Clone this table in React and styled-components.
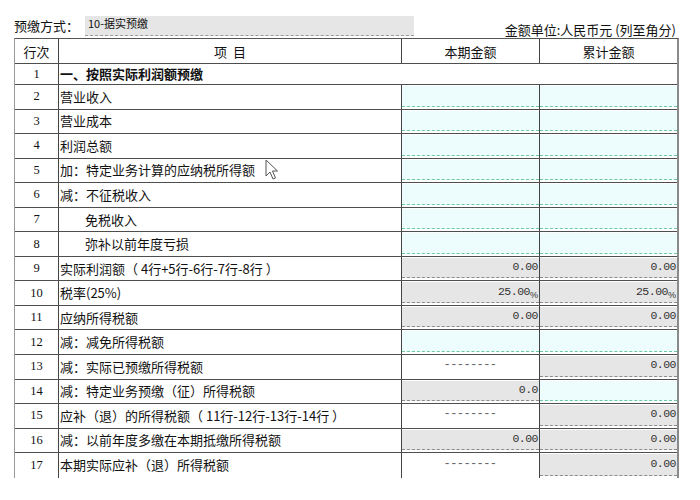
import React from 'react';
import styled, { createGlobalStyle } from 'styled-components';

const Global = createGlobalStyle`
  html, body { margin: 0; padding: 0; background: #fff; }
  body { font-family: "Noto Sans CJK SC", "Noto Sans", sans-serif; color: #111; }
`;

const Page = styled.div`
  position: relative;
  width: 700px;
  height: 500px;
  padding: 16px 0 0 14px;
  box-sizing: border-box;
  overflow: hidden;
`;

const TopBar = styled.div`
  display: flex;
  align-items: flex-start;
  height: 22px;
  width: 665px;
`;

const Label = styled.span`
  font-size: 13px;
  line-height: 20px;
  white-space: nowrap;
`;

const SelectBox = styled.div`
  margin-left: 6px;
  width: 329px;
  height: 20px;
  box-sizing: border-box;
  background: #e6e6e6;
  border-bottom: 1px dashed #9a9a9a;
  font-size: 11px;
  line-height: 14px;
  padding-left: 3px;
`;

const Unit = styled.span`
  margin-left: auto;
  align-self: flex-end;
  font-size: 13px;
  line-height: 16px;
  padding-right: 3px;
  white-space: pre;
`;

const Table = styled.div`
  width: 665px;
  box-sizing: border-box;
  border-left: 1px solid #9a9a9a;
  border-top: 1px solid #555;
  border-right: 2px solid #8a8a8a;
`;

const Row = styled.div`
  display: grid;
  grid-template-columns: 44px 343px 138px 137px;
  height: ${p => p.$h}px;
  box-sizing: border-box;
  border-bottom: ${p => (p.$last ? 'none' : '1px solid #4e4e4e')};
`;

const NoCell = styled.div`
  border-right: 1px solid #444;
  display: flex;
  align-items: center;
  justify-content: center;
  font-family: "Liberation Serif", serif;
  font-size: 12.5px;
`;

const HeadCell = styled.div`
  border-right: ${p => (p.$last ? 'none' : '1px solid #444')};
  display: flex;
  align-items: center;
  justify-content: center;
  font-size: 13px;
  white-space: pre;
`;

const ItemCell = styled.div`
  border-right: ${p => (p.$span ? 'none' : '1px solid #444')};
  grid-column: ${p => (p.$span ? 'span 3' : 'auto')};
  display: flex;
  align-items: center;
  padding-left: ${p => (p.$indent ? 26 : 1)}px;
  padding-bottom: 1px;
  font-size: 13px;
  font-weight: ${p => (p.$bold ? 700 : 400)};
  white-space: pre;
  overflow: hidden;
`;

const ValueCell = styled.div`
  border-right: ${p => (p.$last ? 'none' : '1px solid #444')};
  padding: 1px 0 2px 0;
  display: flex;
  box-sizing: border-box;
`;

const kinds = {
  in: { bg: '#edfdfd', line: '1px dashed #6cc9a0' },
  calc: { bg: '#e6e6e6', line: '1px dashed #8c8c8c' },
  na: { bg: '#ffffff', line: 'none' },
};

const ValueBox = styled.div`
  flex: 1;
  box-sizing: border-box;
  background: ${p => kinds[p.$kind].bg};
  border-bottom: ${p => kinds[p.$kind].line};
  display: flex;
  align-items: center;
  justify-content: ${p => (p.$kind === 'na' ? 'center' : 'flex-end')};
  padding: 0 1px 2px 0;
  font-family: "Liberation Mono", monospace;
  font-size: ${p => (p.$kind === 'na' ? 12 : 11.5)}px;
  letter-spacing: ${p => (p.$kind === 'na' ? '-0.6px' : '-0.5px')};
  color: ${p => (p.$kind === 'na' ? '#666' : '#333')};
  white-space: pre;
`;

const Pct = styled.span`
  font-size: 9px;
  position: relative;
  top: 4px;
  letter-spacing: 0;
  font-family: "Liberation Sans", sans-serif;
`;

const Cursor = styled.svg`
  position: absolute;
  left: 265px;
  top: 159px;
`;

const rows = [
  { n: 2, t: '营业收入', a: ['in'], b: ['in'] },
  { n: 3, t: '营业成本', a: ['in'], b: ['in'] },
  { n: 4, t: '利润总额', a: ['in'], b: ['in'] },
  { n: 5, t: '加：特定业务计算的应纳税所得额', a: ['in'], b: ['in'] },
  { n: 6, t: '减：不征税收入', a: ['in'], b: ['in'] },
  { n: 7, t: '免税收入', indent: true, a: ['in'], b: ['in'] },
  { n: 8, t: '弥补以前年度亏损', indent: true, a: ['in'], b: ['in'] },
  { n: 9, t: '实际利润额（ 4行+5行-6行-7行-8行 ）', a: ['calc', '0.00'], b: ['calc', '0.00'] },
  { n: 10, t: '税率(25%)', a: ['calc', '25.00', true], b: ['calc', '25.00', true] },
  { n: 11, t: '应纳所得税额', a: ['calc', '0.00'], b: ['calc', '0.00'] },
  { n: 12, t: '减：减免所得税额', a: ['in'], b: ['in'] },
  { n: 13, t: '减：实际已预缴所得税额', a: ['na', '--------'], b: ['calc', '0.00'] },
  { n: 14, t: '减：特定业务预缴（征）所得税额', a: ['calc', '0.0'], b: ['in'] },
  { n: 15, t: '应补（退）的所得税额（ 11行-12行-13行-14行 ）', a: ['na', '--------'], b: ['calc', '0.00'] },
  { n: 16, t: '减：以前年度多缴在本期抵缴所得税额', a: ['calc', '0.00'], b: ['calc', '0.00'] },
  { n: 17, t: '本期实际应补（退）所得税额', a: ['na', '--------'], b: ['calc', '0.00'] },
];

function Value({ v, last }) {
  const [kind, text, pct] = v;
  return (
    <ValueCell $last={last}>
      <ValueBox $kind={kind}>
        {text}
        {pct && <Pct>%</Pct>}
      </ValueBox>
    </ValueCell>
  );
}

export default function App() {
  return (
    <>
      <Global />
      <Page>
        <TopBar>
          <Label>预缴方式：</Label>
          <SelectBox>10-据实预缴</SelectBox>
          <Unit>金额单位:人民币元 (列至角分)</Unit>
        </TopBar>
        <Table>
          <Row $h={25}>
            <HeadCell>行次</HeadCell>
            <HeadCell>{'项  目'}</HeadCell>
            <HeadCell>本期金额</HeadCell>
            <HeadCell $last>累计金额</HeadCell>
          </Row>
          <Row $h={21}>
            <NoCell>1</NoCell>
            <ItemCell $span $bold>一、按照实际利润额预缴</ItemCell>
          </Row>
          {rows.map((r, i) => (
            <Row key={r.n} $h={24.55} $last={i === rows.length - 1}>
              <NoCell>{r.n}</NoCell>
              <ItemCell $indent={r.indent}>{r.t}</ItemCell>
              <Value v={r.a} />
              <Value v={r.b} last />
            </Row>
          ))}
        </Table>
        <Cursor width="14" height="22" viewBox="0 0 14 22">
          <path
            d="M1 1 L1 17 L5 13 L8 20 L10.5 19 L7.5 12 L12.5 12 Z"
            fill="#fff"
            stroke="#555"
            strokeWidth="1"
            strokeLinejoin="round"
          />
        </Cursor>
      </Page>
    </>
  );
}
